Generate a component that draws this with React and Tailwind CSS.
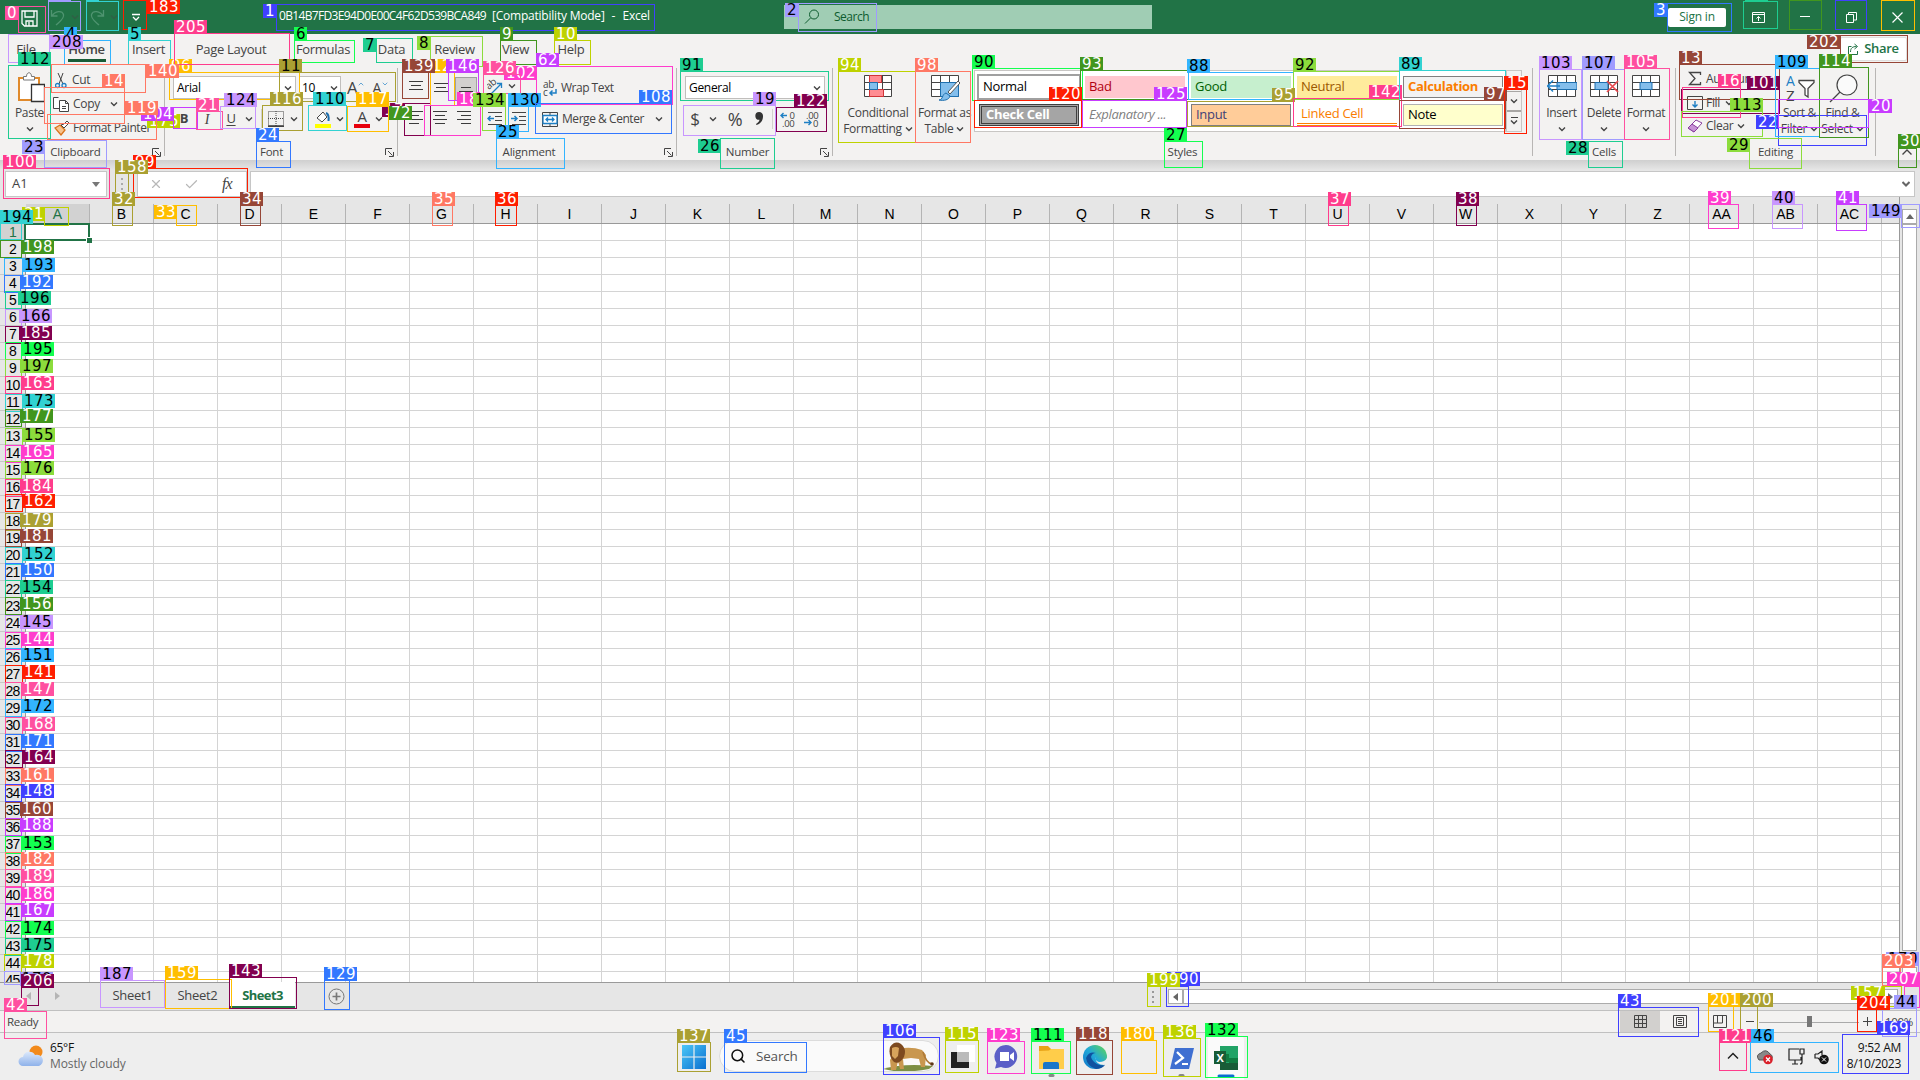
import React from "react";
import { ChevronDown, ChevronUp, Search, X, Check } from "lucide-react";

const Chev = ({ className = "" }) => (
  <svg viewBox="0 0 8 8" className={"h-2 w-2 shrink-0 " + className} fill="none" stroke="#444" strokeWidth="1.4"><path d="M1 2.5 4 5.5 7 2.5" /></svg>
);

const Svg = ({ w = 16, h = 16, className = "", children }) => (
  <svg width={w} height={h} viewBox={`0 0 ${w} ${h}`} className={"block shrink-0 " + className} fill="none" stroke="#444" strokeWidth="1">{children}</svg>
);

const Launcher = () => (
  <Svg w={9} h={9}><path d="M.5 7V.5H7M3 3l4.5 4.5M8.5 4v4.5H4" /></Svg>
);

const Lines = ({ rows }) => (
  <Svg w={16} h={16}>{rows.map(([y, a, b]) => <path key={y} d={`M${a} ${y}.5H${b}`} stroke="#3b3b3b" />)}</Svg>
);

/* ---------- title bar ---------- */
function TitleBar() {
  return (
    <div className="flex h-[34px] items-center bg-[#217346] text-[12px] text-white">
      <Svg w={17} h={17} className="ml-[21px] mt-[2px]"><path stroke="#fff" strokeWidth="1.3" d="M1 1h15v15H3.500L1 13.500zM4 1v6h9V1M5 16v-5h7v5M8 12v4" /></Svg>
      <Svg w={16} h={18} className="ml-[12px]"><path stroke="#4f9470" strokeWidth="1.3" d="M1.500 2v6h6M2 8C5 3 12 2 13.500 6.500 14.500 11 9 14 6 17" /></Svg>
      <Chev className="ml-[5px] opacity-40" />
      <Svg w={16} h={18} className="ml-[10px]"><path stroke="#4f9470" strokeWidth="1.3" d="M14.500 2v6h-6M14 8C11 3 4 2 2.500 6.500 1.500 11 7 14 10 17" /></Svg>
      <Chev className="ml-[5px] opacity-40" />
      <Svg w={8} h={8} className="ml-[14px]"><path stroke="#fff" strokeWidth="1.300" d="M0 1.500h8M1 4l3 3 3-3" /></Svg>
      <div className="ml-[139px] mt-[-2px] flex w-[376px] whitespace-pre text-[12px]">
        <span className="w-[213px] tracking-[-0.66px]">0B14B7FD3E94D0E00C4F62D539BCA849</span>
        <span className="tracking-[-0.22px]">[Compatibility Mode]</span>
        <span className="ml-[7px]">-</span>
        <span className="ml-[7px] tracking-[-0.2px]">Excel</span>
      </div>
      <div className="ml-[129px] flex h-6 w-[368px] items-center bg-[#a0cdb4] text-[#0e5c2f]">
        <Svg w={16} h={16} className="ml-5"><circle cx="10" cy="5.500" r="4.500" stroke="#0e5c2f" /><path stroke="#0e5c2f" d="M6.500 9 1 14.500" /></Svg>
        <span className="ml-[14px] tracking-[-0.5px]">Search</span>
      </div>
      <div className="ml-[516px] flex h-[19px] w-[58px] items-center justify-center rounded-[2px] bg-white tracking-[-0.2px] text-[#217346]">Sign in</div>
      <Svg w={13} h={11} className="ml-[26px]"><path stroke="#fff" d="M.5.5h12v10H.5zM.5 2.500h12M6.500 9V4.500M4.500 6.500l2-2 2 2" /></Svg>
      <Svg w={10} h={10} className="ml-[35px]"><path stroke="#fff" d="M0 4.500h10" /></Svg>
      <Svg w={11} h={11} className="ml-[36px]"><path stroke="#fff" d="M.5 2.500h7v8h-7zM2.500 2.500v-2h8v7.500h-3" /></Svg>
      <Svg w={11} h={11} className="ml-[35px]"><path stroke="#fff" strokeWidth="1.200" d="M.5.5l10 10M10.500.5l-10 10" /></Svg>
    </div>
  );
}

/* ---------- ribbon ---------- */
function Tabs() {
  const t = "flex h-8 items-center justify-center whitespace-nowrap ";
  return (
    <div className="flex h-8 text-[13px] tracking-[-0.3px] text-[#444]">
      <div className={t + "ml-1 w-[44px]"}>File</div>
      <div className={t + "relative ml-[15px] w-[47px] font-semibold"}>Home<span className="absolute bottom-[4px] left-[5px] h-[3px] w-[38px] bg-[#185c37]" /></div>
      <div className={t + "ml-[17px] w-[43px]"}>Insert</div>
      <div className={t + "ml-[3px] w-[116px]"}>Page Layout</div>
      <div className={t + "ml-1 w-[60px]"}>Formulas</div>
      <div className={t + "ml-[18px] w-[41px]"}>Data</div>
      <div className={t + "ml-[17px] w-[51px]"}>Review</div>
      <div className={t + "ml-[19px] w-[33px]"}>View</div>
      <div className={t + "ml-[22px] w-[34px]"}>Help</div>
      <div className="ml-auto mr-[13px] mt-[3px] flex h-6 w-[67px] items-center justify-center gap-[5px] rounded-[2px] border border-[#e0dfde] bg-white font-semibold text-[#217346]">
        <Svg w={11} h={12}><path stroke="#217346" d="M3.500 3.500h-3v8h9V8M2.500 9c0-4 2-5.500 6-5.500M6.500 1l3 2.500-3 2.500" /></Svg>Share
      </div>
    </div>
  );
}

function Group({ name, w, launcher, pad, children }) {
  return (
    <div className={"flex shrink-0 " + w}>
      <div className="flex min-w-0 flex-1 flex-col">
        <div className="flex h-[78px]">{children}</div>
        <div className="flex h-4 items-center text-[11.500px] tracking-[-0.2px]">
          <div className={"flex-1 text-center " + pad}>{name}</div>
          {launcher && <div className="mr-[3px]"><Launcher /></div>}
        </div>
      </div>
      <div className="mt-[2px] h-[88px] w-px bg-[#b8b6b4]" />
    </div>
  );
}

const Big = ({ icon, a, b, w }) => (
  <div className={"flex flex-col items-center pt-[6px] " + w}>
    <div className="flex h-[33px] items-start pt-[3px]">{icon}</div>
    <div className="h-4 whitespace-nowrap leading-4">{a}</div>
    <div className="flex h-4 items-center gap-[3px] whitespace-nowrap leading-4">{b}<Chev /></div>
  </div>
);

const Table = ({ children }) => (
  <Svg w={30} h={26}><path d="M1.500.5h27v21h-27zM1.500 7.500h27M1.500 14.500h27M10.500.5v21M19.500.5v21" stroke="#444" fill="#fff" />{children}</Svg>
);

const STYLES = [
  ["Normal", "bg-white text-black outline outline-2 outline-[#a0a0a0]"],
  ["Bad", "bg-[#ffc7ce] text-[#b00010]"],
  ["Good", "bg-[#c6efce] text-[#006100]"],
  ["Neutral", "bg-[#ffeb9c] text-[#9c5700]"],
  ["Calculation", "border border-[#7f7f7f] bg-[#f2f2f2] font-bold text-[#fa7d00]"],
  ["Check Cell", "border-[3px] border-double border-[#3f3f3f] bg-[#a5a5a5] font-bold text-white"],
  ["Explanatory ...", "bg-white italic text-[#7f7f7f]"],
  ["Input", "border border-[#7f7f7f] bg-[#ffcc99] text-[#3f3f76]"],
  ["Linked Cell", "border-b-[3px] border-double border-[#ff8001] bg-white text-[#fa7d00]"],
  ["Note", "border border-[#b2b2b2] bg-[#ffffcc] text-black"],
];

function Ribbon() {
  const row = "flex items-center whitespace-nowrap ";
  return (
    <div className="h-[126px] bg-[#f3f2f1] text-[12px] tracking-[-0.3px] text-[#444]">
      <Tabs />
      <div className="flex">
        <Group name="Clipboard" w="w-[165px]" launcher pad="pr-[1px]">
          <div className="ml-2 flex w-[43px] flex-col items-center pt-[6px]">
            <Svg w={27} h={32} className="ml-[4px]"><path fill="#fff" stroke="#e08a2c" strokeWidth="2" d="M1 6h20v22H1z" /><path fill="#fff" stroke="#777" d="M5.500 8V4.500h3c0-5 5-5 5 0h3V8z" /><path fill="#fff" stroke="#333" strokeWidth="1.300" d="M13.500 12.500h13v17h-13z" /></Svg>
            <div className="mt-px h-4 leading-4">Paste</div>
            <Chev className="mt-1" />
          </div>
          <div className="pt-[2px]">
            <div className={row + "h-6"}><Svg w={12} h={17} className="ml-1"><path d="M3 1l5 11M8 1 4 12" /><circle cx="2.500" cy="13.500" r="2" stroke="#1e7fc4" strokeWidth="1.300" /><circle cx="9" cy="13.500" r="2" stroke="#1e7fc4" strokeWidth="1.300" /></Svg><span className="ml-[5px]">Cut</span></div>
            <div className={row + "h-6"}><Svg w={17} h={17} className="ml-[2px]"><path fill="#fff" d="M6 12.500H.5V1.500h5M6.500 4.500h6l3 3v8h-9zM12.500 4.500v3h3M9 10.500h4M9 12.500h4" /></Svg><span className="ml-[3px]">Copy</span><Chev className="ml-[10px]" /></div>
            <div className={row + "h-6"}><Svg w={16} h={16} className="ml-[3px]"><path stroke="#d9731a" strokeWidth="1.300" fill="#f7c38e" d="M1 8l5-3 5 5-4 5z" /><path fill="#fff" d="M7 5l3 3 5-5-2-2-3 3z" /></Svg><span className="ml-[3px] tracking-[-0.4px]">Format Painter</span></div>
          </div>
        </Group>

        <Group name="Font" w="w-[233px]" launcher pad="pr-[7px]">
          <div className="pl-2">
            <div className={row + "mt-[10px] h-[23px] text-black"}>
              <div className="flex h-[23px] w-[123px] items-center justify-between border border-[#c0bebc] bg-white px-[3px]"><span>Arial</span><Chev /></div>
              <div className="ml-[3px] flex h-[23px] w-[42px] items-center justify-between border border-[#c0bebc] bg-white px-[2px]"><span>10</span><Chev /></div>
              <span className="ml-[6px] text-[17px] text-[#444]">A</span><ChevronUp size={8} color="#1e7fc4" className="mb-2" />
              <span className="ml-[7px] text-[14px] text-[#444]">A</span><ChevronDown size={8} color="#1e7fc4" className="mb-2" />
            </div>
            <div className={row + "mt-2 h-6"}>
              <span className="w-[22px] text-center text-[13px] font-bold">B</span>
              <span className="w-6 text-center font-['Liberation_Serif'] text-[14px] italic">I</span>
              <span className="w-6 text-center text-[13px] underline underline-offset-2">U</span>
              <Chev className="ml-[2px]" />
              <div className="ml-[8px] h-5 w-px bg-[#d2d0ce]" />
              <Svg w={16} h={16} className="ml-[6px]"><path strokeDasharray="1 1" d="M.5.5h15v14H.5zM8 0v15M0 7.500h15" /><path stroke="#222" strokeWidth="1.300" d="M0 15.200h16" /></Svg>
              <Chev className="ml-[6px]" />
              <Svg w={16} h={18} className="ml-[17px]"><path fill="#fff" d="M2 8l6-6 4 5-5 5z" /><path stroke="#1e6fae" strokeWidth="2" d="M11 3c3 1 3 4 2.500 8" /><path fill="#ff0" stroke="none" d="M0 14h16v4H0z" /></Svg>
              <Chev className="ml-[5px]" />
              <div className="ml-[10px] flex w-4 flex-col items-center"><span className="h-[14px] text-[15px] leading-[13px]">A</span><span className="h-1 w-4 bg-red-600" /></div>
              <Chev className="ml-[5px]" />
            </div>
          </div>
        </Group>

        <Group name="Alignment" w="w-[279px]" launcher pad="pl-[10px] pr-[14px]">
          <div className="w-[87px]">
            <div className={row + "mt-[6px] h-7 gap-1 pl-2"}>
              <div className="w-5 pl-[2px]"><Lines rows={[[3, 1, 15], [7, 3, 13], [11, 1, 15]]} /></div>
              <div className="ml-px w-5 pl-[2px] pt-1"><Lines rows={[[3, 1, 15], [7, 3, 13], [11, 1, 15]]} /></div>
              <div className="mt-[6px] flex h-[24px] w-[22px] items-end justify-center border border-[#a0a0a0] bg-[#d2d0ce]"><Lines rows={[[3, 3, 13], [7, 1, 15], [11, 3, 13]]} /></div>
            </div>
            <div className={row + "mt-[6px] h-6 gap-2 pl-[10px]"}>
              <Lines rows={[[1, 1, 15], [5, 1, 11], [9, 1, 15], [13, 1, 11]]} />
              <Lines rows={[[1, 1, 15], [5, 3, 13], [9, 1, 15], [13, 3, 13]]} />
              <Lines rows={[[1, 1, 15], [5, 5, 15], [9, 1, 15], [13, 5, 15]]} />
            </div>
          </div>
          <div className="w-[54px]">
            <div className={row + "mt-[8px] h-6 pl-[2px]"}><Svg w={17} h={17}><path stroke="#1e7fc4" strokeWidth="1.300" d="M4 16 14 6M10 5.500h4.500V10" /><text x="0" y="9" transform="rotate(-40 5 8)" fontSize="10" fill="#444" stroke="none">ab</text></Svg><Chev className="ml-1" /></div>
            <div className={row + "mt-[9px] h-6 gap-2 pl-[2px]"}>
              <Svg w={16} h={16}><path d="M1 1.500h14M8 5.500h7M8 9.500h7M1 13.500h14" /><path stroke="#1e7fc4" strokeWidth="1.500" d="M7 7.500H1M3.500 5 1 7.500 3.500 10" /></Svg>
              <Svg w={16} h={16}><path d="M1 1.500h14M8 5.500h7M8 9.500h7M1 13.500h14" /><path stroke="#1e7fc4" strokeWidth="1.500" d="M0 7.500h6M3.500 5 6 7.500 3.500 10" /></Svg>
            </div>
          </div>
          <div>
            <div className={row + "mt-[10px] h-6 pl-[4px]"}><Svg w={16} h={17}><text x="0" y="8" fontSize="10" fill="#444" stroke="none">ab</text><text x="0" y="16" fontSize="10" fill="#444" stroke="none">c</text><path stroke="#1e7fc4" strokeWidth="1.500" d="M13 9v4H7M9.500 10.500 7 13l2.500 2.500" /></Svg><span className="ml-[2px] tracking-[-0.5px]">Wrap Text</span></div>
            <div className={row + "mt-[7px] h-6 pl-[3px]"}><Svg w={16} h={15}><path d="M.5.5h15v14H.5zM.5 3.500h15M.5 11.500h15M8 .5v3M8 11.500v3" /><path fill="#fff" stroke="#1e7fc4" strokeWidth="1.300" d="M1 3.500h14v8H1zM4 7.500h8M6 5.500l-2 2 2 2M10 5.500l2 2-2 2" /></Svg><span className="ml-1 w-[84px] tracking-[-0.45px]">Merge & Center</span><Chev className="ml-[9px]" /></div>
          </div>
        </Group>

        <Group name="Number" w="w-[156px]" launcher pad="pr-[2px]">
          <div className="pl-2">
            <div className="mt-[10px] flex h-[23px] w-[140px] items-center justify-between border border-[#c0bebc] bg-white px-[3px] text-black"><span>General</span><Chev /></div>
            <div className={row + "mt-2 h-6"}>
              <span className="w-5 text-center text-[17px]">$</span><Chev className="ml-1" />
              <span className="ml-[8px] w-5 text-center text-[18px]">%</span>
              <Svg w={10} h={14} className="ml-[9px] mr-px"><path fill="#333" stroke="none" d="M5 0a4 4 0 0 1 4 4.500C9 9 6 12 2.500 13L2 12c2-1 3.300-2.500 3.500-4.200A3.900 3.900 0 1 1 5 0z" /></Svg>
              <div className="ml-[7px] h-5 w-px bg-[#d2d0ce]" />
              <Svg w={16} h={18} className="ml-[7px]"><path stroke="#1e7fc4" strokeWidth="1.400" d="M7 5.500H1M3.500 3 1 5.500 3.500 8" /><text x="9.500" y="8.500" fontSize="9.500" fill="#444" stroke="none">0</text><text x="2" y="17" fontSize="9.500" fill="#444" stroke="none">.00</text></Svg>
              <Svg w={16} h={18} className="ml-2"><path stroke="#1e7fc4" strokeWidth="1.400" d="M0 12.500h7M4.500 10 7 12.500 4.500 15" /><text x="2" y="8.500" fontSize="9.500" fill="#444" stroke="none">.00</text><text x="9" y="17" fontSize="9.500" fill="#444" stroke="none">0</text></Svg>
            </div>
          </div>
        </Group>

        <Group name="Styles" w="w-[700px]" pad="">
          <Big w="ml-[6px] w-[78px]" a="Conditional" b="Formatting" icon={<Table><path fill="#ff8c92" stroke="#d13438" d="M6.500.5h12v7h-12zM6.500 14.500h14v7h-14z" /><path fill="#83beec" stroke="#1e6fae" d="M6.500 7.500h8v7h-8z" /></Table>} />
          <Big w="w-[55px]" a="Format as" b="Table" icon={<Table><path fill="#83beec" stroke="#1e6fae" d="M10.500 7.500h18v14h-18z" /><path fill="#fff" stroke="#555" d="M28 6 18 17l2 2L30 8z" /><path fill="#83beec" stroke="#1e6fae" d="M9 25c4 0 3-6 7-7l4 3c-1 4-6 5-11 4z" /></Table>} />
          <div className="ml-[2px] mt-1 flex h-[62px] w-[548px]">
            <div className="grid h-[62px] w-[532px] grid-cols-[repeat(5,100px)] content-start gap-x-[6px] gap-y-[6px] border border-[#c8c6c4] bg-white pl-1 pt-[5px] text-[13px]">
              {STYLES.map(([n, c]) => <div key={n} className={"flex h-[22px] items-center whitespace-nowrap pl-1 tracking-[-0.3px] " + c}>{n}</div>)}
            </div>
            <div className="flex flex-col border border-[#c8c6c4]">
              <div className="flex h-5 w-[14px] items-center justify-center"><Chev className="rotate-180" /></div>
              <div className="flex h-5 w-[14px] items-center justify-center border-y border-[#a8a6a4]"><Chev /></div>
              <div className="flex h-5 w-[14px] flex-col items-center justify-center border-t border-[#a8a6a4]"><span className="h-px w-[7px] bg-[#444]" /><Chev /></div>
            </div>
          </div>
        </Group>

        <Group name="Cells" w="w-[143px]" pad="">
          <Big w="ml-[7px] w-[43px]" a="Insert" icon={<Table><path fill="#83beec" stroke="#1e6fae" d="M10 7.500h20v7H10z" /><path stroke="#1e7fc4" strokeWidth="1.500" d="M13 11H1M6 5.500.5 11 6 16.500" /></Table>} />
          <Big w="w-[42px]" a="Delete" icon={<Table><path fill="#83beec" stroke="#1e6fae" d="M6 7.500h13v7H6z" /><path stroke="#e8484c" strokeWidth="1.700" d="M18 6l11 11M29 6 18 17" /></Table>} />
          <Big w="w-[42px]" a="Format" icon={<Table><path fill="#83beec" stroke="#1e6fae" d="M9 7.500h12v7H9z" /></Table>} />
        </Group>

        <Group name="Editing" w="w-[200px]" pad="">
          <div className="w-[102px] pl-3 pt-px">
            <div className={row + "h-6"}><Svg w={14} h={16}><path strokeWidth="1.300" d="M12.500 4V1.500H1.500L7 7.500l-5.500 6h11V11" /></Svg><span className="ml-1">AutoSum</span></div>
            <div className={row + "h-6"}><Svg w={16} h={14} className="-ml-px"><path d="M.5.5h15v13H.5zM.5 3.500h15" /><path stroke="#1e7fc4" strokeWidth="1.400" d="M8 5v6M5.500 8.500 8 11l2.500-2.500" /></Svg><span className="ml-[3px]">Fill</span><Chev className="ml-[5px]" /></div>
            <div className={row + "h-[22px]"}><Svg w={16} h={14} className="-ml-px"><path fill="#fff" stroke="#8a3f9e" d="M1 9 9 1l6 3-8 9z" /><path fill="#c793d6" stroke="#8a3f9e" d="M1 9l4-4 6 4-4 4z" /></Svg><span className="ml-[3px]">Clear</span><Chev className="ml-[4px]" /></div>
          </div>
          <Big w="w-[43px]" a="Sort &" b="Filter" icon={<Svg w={30} h={28}><text x="1" y="11" fontSize="14" fill="#1e7fc4" stroke="none">A</text><text x="1" y="26" fontSize="15" fill="#444" stroke="none">Z</text><path fill="#fff" strokeWidth="1.300" d="M14 5.500h15v2l-6 6V22l-3-2v-6.500l-6-6z" /></Svg>} />
          <Big w="w-[43px]" a="Find &" b="Select" icon={<Svg w={30} h={30} className="-mt-px"><circle cx="19" cy="11" r="10" fill="#fafafa" strokeWidth="1.200" /><path strokeWidth="1.200" d="M12 18 2 28" /></Svg>} />
        </Group>
        <div className="ml-[26px] mt-[83px]"><Svg w={10} h={7}><path strokeWidth="1.400" d="M.5 5.500 5 1l4.500 4.500" /></Svg></div>
      </div>
    </div>
  );
}

/* ---------- formula bar ---------- */
function FormulaBar() {
  return (
    <div className="flex h-[37px] bg-[#e6e6e6] bg-[linear-gradient(#cfcfcf,#e6e6e6_10px)] pt-[11px] text-[#444]">
      <div className="ml-[5px] flex h-[26px] w-[102px] items-center justify-between border border-[#c6c6c6] bg-white px-[6px] text-[13px]">A1<Svg w={8} h={5}><path fill="#777" stroke="none" d="M0 0h8L4 5z" /></Svg></div>
      <div className="ml-[14px] flex w-[2px] flex-col justify-center gap-[3px]">{[0, 1, 2].map((i) => <span key={i} className="h-[2px] w-[2px] bg-[#aaa]" />)}</div>
      <div className="ml-[14px] flex h-[26px] w-[110px] items-center border border-[#c6c6c6] bg-white">
        <X size={14} color="#b8b8b8" className="ml-[11px]" /><Check size={15} color="#b8b8b8" className="ml-[21px]" />
        <span className="ml-[23px] font-['Liberation_Serif'] text-[16px] italic tracking-[-1px]">fx</span>
      </div>
      <div className="ml-[3px] flex h-[26px] w-[1665px] items-center justify-end border border-[#c6c6c6] bg-white pr-1"><Svg w={8} h={8}><path strokeWidth="2" stroke="#666" d="M.5 2 4 5.500 7.500 2" /></Svg></div>
    </div>
  );
}

/* ---------- sheet ---------- */
const COLS = [..."ABCDEFGHIJKLMNOPQRSTUVWXYZ", "AA", "AB", "AC"];
const ROWS = Array.from({ length: 45 }, (_, i) => i + 1);

function Sheet() {
  return (
    <div className="flex h-[786px] bg-[#e6e6e6] font-['Liberation_Sans'] text-[14px] text-black">
      <div className="h-[786px] w-[1899px] overflow-hidden border-b border-[#9a9a9a]">
        <div className="flex h-[27px] border-b border-[#999]">
          <div className="w-[26px] shrink-0" />
          {COLS.map((c, i) => (
            <div key={c} className={"mt-[7px] flex h-[19px] w-16 shrink-0 items-center justify-center border-r border-[#b4b4b4] pt-[2px] " + (i === 0 ? "bg-[#d2d2d2] text-[#217346]" : "")}>{c}</div>
          ))}
        </div>
        <div className="flex">
          <div className="w-[26px] shrink-0 border-r border-[#999]">
            {ROWS.map((r) => (
              <div key={r} className={"flex h-[17px] items-center justify-center border-b border-[#c8c8c8] pt-px text-[14px] tracking-[-0.8px] " + (r === 1 ? "bg-[#d2d2d2] text-[#217346]" : "")}>{r}</div>
            ))}
          </div>
          <div className="relative h-[765px] flex-1 bg-white bg-[linear-gradient(to_right,transparent_63px,#d4d4d4_63px),linear-gradient(to_bottom,transparent_16px,#d4d4d4_16px)] bg-[size:64px_17px]">
            <div className="absolute -left-[2px] -top-px h-[18px] w-[66px] border-2 border-[#217346]" />
            <div className="absolute left-[60px] top-[13px] h-[6px] w-[6px] border-l border-t border-white bg-[#217346]" />
          </div>
        </div>
      </div>
      <div className="w-[3px] border-l border-[#999]" />
      <div className="mt-3 flex w-[15px] flex-col">
        <div className="flex h-[15px] items-center justify-center border border-[#ababab] bg-white"><Svg w={8} h={5}><path fill="#666" stroke="none" d="M0 5h8L4 0z" /></Svg></div>
        <div className="h-[727px] border border-[#ababab] bg-white" />
        <div className="mt-4 flex h-[15px] border border-[#ababab] bg-white" />
      </div>
    </div>
  );
}

function SheetTabs() {
  const tab = "flex h-[25px] w-[65px] items-center justify-center ";
  return (
    <div className="flex h-[28px] border-b border-[#c0c0c0] bg-[#e6e6e6] text-[13px] tracking-[-0.3px] text-[#444]">
      <Svg w={5} h={8} className="ml-[26px] mt-[9px]"><path fill="#b5b5b5" stroke="none" d="M5 0v8L0 4z" /></Svg>
      <Svg w={5} h={8} className="ml-6 mt-[9px]"><path fill="#b5b5b5" stroke="none" d="M0 0v8l5-4z" /></Svg>
      <div className={tab + "ml-[40px] border-r border-[#ababab] pl-px"}>Sheet1</div>
      <div className={tab + "border-r border-[#ababab] pl-px"}>Sheet2</div>
      <div className={tab + "-mt-px h-[26px] border-b-2 border-[#217346] bg-white pt-[3px] font-bold tracking-[-0.6px] text-[#217346]"}>Sheet3</div>
      <Svg w={17} h={17} className="ml-[33px] mt-[5px]"><circle cx="8.500" cy="8.500" r="7.500" stroke="#777" /><path stroke="#777" strokeWidth="1.700" d="M8.500 4.500v8M4.500 8.500h8" /></Svg>
      <div className="ml-[807px] mt-2 flex w-[2px] flex-col gap-[3px]">{[0, 1, 2].map((i) => <span key={i} className="h-[2px] w-[2px] bg-[#999]" />)}</div>
      <div className="ml-[14px] mt-[6px] flex h-[15px] w-[15px] items-center justify-center border border-[#ababab] bg-white"><Svg w={5} h={8}><path fill="#666" stroke="none" d="M5 0v8L0 4z" /></Svg></div>
      <div className="mt-[6px] h-[15px] w-[700px] border border-[#ababab] bg-white" />
      <div className="mt-[6px] flex h-[15px] w-[15px] items-center justify-center border border-[#ababab] bg-white"><Svg w={5} h={8}><path fill="#666" stroke="none" d="M0 0v8l5-4z" /></Svg></div>
    </div>
  );
}

function StatusBar() {
  return (
    <div className="flex h-[22px] items-center border-b border-[#c0c0c0] bg-[#f3f2f1] text-[11.500px] tracking-[-0.3px] text-[#444]">
      <span className="ml-[7px] w-[1613px]">Ready</span>
      <div className="flex h-[21px] w-10 items-center justify-center bg-[#d2d0ce]"><Svg w={13} h={13}><path d="M.5.5h12v12H.5zM.5 4.500h12M.5 8.500h12M4.500.5v12M8.500.5v12" /></Svg></div>
      <div className="flex w-10 items-center justify-center"><Svg w={14} h={13}><path d="M.5.5h13v12H.5zM3.500 2.500h7v8h-7zM5 4.500h4M5 6.500h4M5 8.500h4" /></Svg></div>
      <Svg w={14} h={13} className="ml-[13px]"><path d="M.5.5h13v12H.5zM4.500.5v7.500M9.500.5V8M.5 8h9" /></Svg>
      <Svg w={8} h={9} className="ml-[19px]"><path d="M0 4.500h8" /></Svg>
      <div className="ml-[5px] flex h-3 w-[100px] items-center justify-center bg-[linear-gradient(transparent_6px,#aaa_6px,#aaa_7px,transparent_7px)]"><span className="h-[11px] w-[5px] bg-[#777]" /></div>
      <Svg w={9} h={9} className="ml-1"><path d="M0 4.500h9M4.500 0v9" /></Svg>
      <span className="ml-[13px]">100%</span>
    </div>
  );
}

function Taskbar() {
  const cell = "flex h-full items-center justify-center ";
  return (
    <div className="flex h-[47px] bg-[#eeeeee] text-[12px] text-[#111]">
      <Svg w={26} h={24} className="ml-[18px] mt-[11px]">
        <defs><linearGradient id="cl" x1="0" y1="0" x2="0" y2="1"><stop offset="0" stopColor="#dbe8fb" /><stop offset="1" stopColor="#8fb2ea" /></linearGradient></defs>
        <circle cx="18" cy="8" r="6.500" fill="#f28a1c" stroke="none" /><path fill="url(#cl)" stroke="none" d="M5 22a4.500 4.500 0 0 1 0-9 6.500 6.500 0 0 1 12-2 5.600 5.600 0 0 1 4 11z" />
      </Svg>
      <div className="ml-[6px] mt-[7px] w-[627px] leading-4"><div className="tracking-[-0.3px]">65°F</div><div className="tracking-[-0.1px] text-[#666]">Mostly cloudy</div></div>
      <Svg w={24} h={24} className="ml-[5px] mt-[12px]">
        <defs><linearGradient id="wn" x1="0" y1="0" x2="1" y2="1"><stop offset="0" stopColor="#4cc7f7" /><stop offset="1" stopColor="#0a6fd0" /></linearGradient></defs>
        <path fill="url(#wn)" stroke="none" d="M0 0h11.400v11.400H0zM12.600 0H24v11.400H12.600zM0 12.600h11.400V24H0zM12.600 12.600H24V24H12.600z" />
      </Svg>
      <div className="ml-[13px] mt-[7px] flex h-[32px] w-[220px] items-center overflow-hidden rounded-full border border-[#dcdcdc] bg-[#fafafa]">
        <Search size={16} strokeWidth={2.300} className="ml-[10px]" /><span className="ml-[10px] text-[13.500px] tracking-[-0.2px] text-[#555]">Search</span>
        <Svg w={52} h={30} className="ml-auto mr-[3px] mt-px">
          <path fill="#7d8f43" stroke="none" d="M0 27q20-6 50-3l-4 3q-18 3-30 3z" />
          <path fill="#c9974f" stroke="none" d="M14 7q14-3 25 1l4 5-1 12h-4l-2-8-8-1-8 1 1 10h-4l-2-8-2 9h-5l-1-10z" /><path stroke="#b07a38" strokeWidth="1.600" d="M40 10q3 11 9 12" /><circle cx="49" cy="22" r="1.800" fill="#5e3817" stroke="none" />
          <path fill="#7d4a20" stroke="none" d="M7 5Q12-2 18 2q6 5 3 13-5 8-10 5-6-6-4-15z" /><path fill="#d8a45c" stroke="none" d="M9 6q4-2 7 0l-1 8-3 3-3-3z" />
        </Svg>
      </div>
      <div className={cell + "ml-[7px] w-[34px]"}><Svg w={24} h={24}><path fill="#222" stroke="none" d="M0 7h18v16H0z" /><path fill="#fff" stroke="none" d="M6 0h18v17H6z" /><path fill="#bbb" stroke="none" d="M6 7h12v10H6z" /></Svg></div>
      <div className={cell + "ml-[7px] w-[38px]"}><Svg w={24} h={24}><path fill="#5b5fc7" stroke="none" d="M12 0a11.500 11.500 0 1 1-5 22L1 23.500 2.500 18A11.500 11.500 0 0 1 12 0z" /><path fill="#fff" stroke="none" d="M6 7h9v9H6zM16 10l4-3v9l-4-3z" /></Svg></div>
      <div className={cell + "ml-[6px] w-[40px]"}><Svg w={25} h={32} className="mt-2"><path fill="#e8a317" stroke="none" d="M0 1h9l3 3v6H0z" /><path fill="#ffcd4a" stroke="none" d="M0 6l10-.5L12 4h13v20H0z" /><path fill="#1976c9" stroke="none" d="M4 24v-5q0-2 2-2h12q2 0 2 2v5z" /><path stroke="#888" strokeWidth="3" strokeLinecap="round" d="M11 30.500h3" /></Svg></div>
      <div className={cell + "ml-[5px] w-[37px]"}><Svg w={24} h={24}>
        <defs><linearGradient id="ed" x1="0" y1="1" x2="1" y2="0"><stop offset="0" stopColor="#1074c9" /><stop offset=".5" stopColor="#22a8d8" /><stop offset="1" stopColor="#64d84c" /></linearGradient></defs>
        <circle cx="12" cy="12" r="12" fill="url(#ed)" stroke="none" /><path fill="#0f52a0" stroke="none" d="M8 12q1-4 5-4-7-2-10 5 1 8 10 11 6 0 9-4-4 1-8-1-5-3-6-7z" /><path fill="#eee" stroke="none" d="M12 12q0 4 4 5 6 0 8-4v5l-3 2q-8 0-9-8z" />
      </Svg></div>
      <div className={cell + "ml-[49px] w-[38px]"}><Svg w={25} h={32} className="mt-2"><path fill="#3f6fd1" stroke="none" d="M6 3h19l-5 21H1z" /><path stroke="#fff" strokeWidth="2.200" d="M8 7l6 6-8 6M13 19h6" /><path stroke="#888" strokeWidth="3" strokeLinecap="round" d="M11 30.500h3" /></Svg></div>
      <div className={cell + "ml-[8px] mt-[3px] h-[40px] w-[36px] rounded bg-[#fafafa]"}><Svg w={24} h={32} className="mt-[4px]"><path fill="#21a366" stroke="none" d="M6 0h18v24H6z" /><path fill="#107c41" stroke="none" d="M6 8h9v8H6zM15 12h9v5h-9z" /><path fill="#185c37" stroke="none" d="M6 17h18v7H6zM0 5h12v13H0z" /><text x="2.500" y="15.500" fontSize="11" fontWeight="700" fill="#fff" stroke="none">X</text><path stroke="#0a6fd0" strokeWidth="3" strokeLinecap="round" d="M5 30h14" /></Svg></div>
      <Svg w={12} h={8} className="ml-[483px] mt-[19px]"><path stroke="#222" strokeWidth="1.500" d="M1 6.500 6 1.500l5 5" /></Svg>
      <Svg w={18} h={16} className="ml-[17px] mt-[16px]"><path fill="#888" stroke="#555" d="M3 11Q-1 6 5 4q5-5 9 1 4 2 1 6z" /><circle cx="12" cy="10.500" r="4.800" fill="#d9202a" stroke="none" /><path stroke="#fff" strokeWidth="1.300" d="M10 8.500l4 4M14 8.500l-4 4" /></Svg>
      <Svg w={17} h={17} className="ml-[14px] mt-[15px]"><path stroke="#222" strokeWidth="1.200" d="M11 1H1v11h12V9M4 16h6M7 12v4M12 1h4v5h-4zM14 6v8q0 2-2 2" /></Svg>
      <Svg w={15} h={15} className="ml-[9px] mt-[17px]"><path stroke="#222" strokeWidth="1.200" d="M1 4h3l4-3v4M1 4v4h3l2 2" /><circle cx="10" cy="9.500" r="4.800" fill="#111" stroke="none" /><path stroke="#fff" d="M8 7.500l4 4M12 7.500l-4 4" /></Svg>
      <div className="ml-auto mr-[19px] mt-[7px] text-right leading-4 tracking-[-0.3px]"><div>9:52 AM</div><div>8/10/2023</div></div>
    </div>
  );
}

/* ---------- numbered element markers ---------- */
const C = {
  hot: "#ff50a0", blue: "#4040ff", lil: "#c896ff", red: "#ff1e00", sky: "#32b4ff", teal: "#32d2d2", pink: "#ff3c8c",
  lime: "#14ff50", sea: "#1ecd91", cor: "#ff7864", vio: "#c83cff", olv: "#aaa032", peri: "#a09bff", roy: "#3278ff",
  grn: "#41961e", brn: "#964637", mag: "#ff3ccd", apl: "#8cdc3c", org: "#ffbe00", mar: "#82004f", yel: "#bed200",
};
// [label, label x, label y, colour, dark text, box x, y, width, height]
const MARKS = [
  ["21", 48, -12, "peri", 1, 48, 1, 33, 30], ["4", 86, -12, "teal", 1, 86, 1, 33, 30], ["0", 5, 6, "hot", 0, 18, 6, 28, 27], ["1", 263, 4, "blue", 0, 276, 4, 379, 27],
  ["183", 147, 0, "red", 0, 123, 0, 24, 30], ["4", 64, 27, "sky", 1, 64, 40, 47, 25], ["208", 50, 35, "lil", 1, 8, 34, 42, 29], ["5", 128, 27, "teal", 1, 128, 40, 43, 25],
  ["6", 294, 27, "lime", 1, 294, 40, 61, 23], ["7", 363, 38, "sea", 1, 376, 38, 37, 25],
  ["112", 18, 52, "sea", 1, 8, 65, 43, 74], ["14", 102, 74, "cor", 0, 44, 87, 81, 37],
  ["96", 169, 59, "org", 0, 169, 72, 131, 28], ["205", 174, 20, "pink", 0, 174, 33, 116, 32], ["140", 146, 64, "cor", 0, 51, 64, 95, 29],
  ["11", 279, 59, "olv", 1, 279, 72, 117, 30], ["175", 147, 114, "yel", 0, 0, 0, 0, 0], ["104", 141, 107, "vio", 0, 173, 107, 25, 22],
  ["119", 125, 101, "cor", 0, 47, 114, 110, 26],
  ["21", 196, 98, "hot", 0, 196, 111, 27, 19], ["124", 224, 93, "lil", 1, 220, 106, 36, 23], ["116", 270, 92, "olv", 0, 262, 105, 41, 26],
  ["110", 313, 92, "teal", 1, 308, 105, 39, 26], ["17", 382, 103, "mar", 0, 404, 103, 27, 33], ["117", 356, 92, "org", 0, 347, 106, 42, 26], ["72", 389, 106, "grn", 0, 0, 0, 0, 0],
  ["24", 256, 128, "roy", 0, 256, 141, 35, 27], ["23", 22, 140, "peri", 1, 44, 140, 63, 28], ["100", 3, 155, "pink", 0, 3, 168, 107, 31],
  ["99", 133, 155, "red", 0, 133, 168, 115, 30], ["158", 115, 160, "olv", 0, 115, 173, 14, 21], ["32", 112, 192, "olv", 0, 112, 205, 21, 21],
  ["33", 154, 205, "org", 0, 176, 205, 21, 21], ["34", 240, 192, "brn", 0, 240, 205, 21, 21], ["31", 22, 207, "yel", 0, 44, 207, 25, 19],
  ["194", 0, 210, "teal", 1, 0, 223, 22, 17], ["8", 417, 36, "apl", 1, 430, 36, 53, 31], ["9", 500, 27, "grn", 0, 500, 40, 37, 25],
  ["10", 554, 27, "yel", 0, 554, 40, 37, 25], ["102", 504, 66, "mag", 0, 536, 66, 137, 39], ["62", 536, 53, "vio", 0, 0, 0, 0, 0],
  ["12", 430, 59, "org", 0, 430, 72, 25, 34], ["139", 402, 59, "brn", 0, 402, 72, 27, 27], ["146", 446, 59, "vio", 0, 448, 72, 31, 29], ["126", 483, 61, "hot", 0, 483, 74, 38, 20],
  ["18", 457, 92, "mag", 0, 424, 105, 57, 31], ["134", 473, 93, "apl", 1, 482, 106, 24, 25], ["130", 508, 93, "sky", 1, 508, 106, 21, 26],
  ["108", 639, 90, "roy", 0, 535, 103, 137, 31], ["25", 496, 125, "sky", 1, 496, 138, 69, 31], ["91", 680, 58, "sea", 1, 680, 71, 149, 30],
  ["19", 753, 92, "lil", 1, 683, 105, 93, 31], ["122", 794, 94, "mar", 0, 776, 107, 51, 25], ["26", 698, 139, "sea", 1, 720, 138, 55, 31],
  ["35", 432, 192, "cor", 0, 432, 205, 21, 21], ["36", 495, 192, "red", 0, 495, 205, 22, 21], ["2", 785, 3, "peri", 1, 798, 3, 79, 29],
  ["94", 838, 58, "yel", 0, 838, 71, 78, 72], ["98", 915, 58, "cor", 0, 915, 71, 56, 72], ["90", 972, 55, "lime", 1, 972, 68, 111, 33],
  ["93", 1080, 57, "grn", 0, 1080, 70, 109, 30], ["120", 1049, 87, "red", 0, 974, 100, 108, 28], ["88", 1187, 59, "sky", 1, 1188, 72, 106, 28],
  ["125", 1154, 87, "vio", 0, 1082, 100, 105, 28], ["27", 1164, 128, "lime", 1, 1164, 141, 39, 27], ["92", 1293, 58, "apl", 1, 1293, 71, 107, 29],
  ["95", 1272, 88, "olv", 0, 1187, 101, 107, 26], ["142", 1369, 85, "pink", 0, 1293, 98, 109, 29], ["89", 1399, 57, "teal", 1, 1399, 70, 107, 31],
  ["97", 1484, 87, "brn", 0, 1399, 100, 107, 29], ["15", 1505, 76, "red", 0, 1504, 76, 23, 58], ["37", 1328, 192, "pink", 0, 1328, 205, 21, 21],
  ["38", 1456, 192, "mar", 0, 1456, 205, 21, 21], ["3", 1654, 3, "roy", 0, 1667, 3, 65, 29], ["44", 1745, -12, "sea", 1, 1743, 1, 35, 28],
  ["", 0, 0, "grn", 0, 1789, 0, 33, 30], ["", 0, 0, "blue", 0, 1835, 0, 32, 30], ["", 0, 0, "org", 0, 1881, 0, 34, 31],
  ["202", 1807, 35, "brn", 0, 1840, 35, 68, 28], ["103", 1539, 56, "lil", 1, 1539, 69, 43, 71], ["107", 1582, 56, "peri", 1, 1582, 69, 43, 71],
  ["105", 1624, 55, "hot", 0, 1624, 68, 46, 72], ["13", 1679, 51, "brn", 0, 1679, 64, 101, 36], ["101", 1747, 76, "mar", 0, 1681, 89, 99, 25],
  ["16", 1718, 74, "pink", 0, 1682, 87, 59, 31], ["113", 1730, 98, "apl", 1, 1681, 111, 82, 26], ["22", 1756, 115, "blue", 0, 1778, 115, 89, 31],
  ["109", 1775, 55, "sky", 1, 1775, 68, 45, 69], ["114", 1819, 54, "grn", 0, 1819, 67, 50, 71], ["20", 1869, 99, "vio", 0, 1778, 99, 91, 29],
  ["28", 1566, 141, "sea", 1, 1588, 141, 35, 27], ["29", 1727, 138, "apl", 1, 1749, 138, 53, 31], ["30", 1898, 134, "grn", 0, 1898, 148, 19, 20],
  ["39", 1708, 191, "mag", 0, 1708, 204, 31, 25], ["40", 1772, 191, "lil", 1, 1772, 204, 31, 25], ["41", 1836, 191, "vio", 0, 1836, 204, 31, 27],
  ["149", 1869, 204, "peri", 1, 1901, 204, 19, 24],
  ["187", 100, 967, "lil", 1, 100, 980, 65, 28], ["159", 165, 966, "org", 0, 165, 979, 67, 30], ["143", 229, 964, "mar", 0, 229, 977, 68, 32],
  ["129", 324, 967, "roy", 0, 324, 980, 26, 30], ["42", 4, 998, "hot", 0, 4, 1011, 43, 28], ["190", 1167, 972, "blue", 0, 1166, 986, 23, 21],
  ["199", 1147, 973, "yel", 0, 1147, 986, 14, 21], ["137", 677, 1029, "olv", 0, 677, 1042, 34, 30], ["45", 724, 1029, "roy", 0, 724, 1042, 83, 31],
  ["106", 883, 1024, "blue", 0, 883, 1037, 57, 38], ["115", 945, 1027, "yel", 0, 945, 1040, 34, 33], ["123", 987, 1028, "mag", 0, 987, 1041, 38, 33],
  ["111", 1031, 1028, "lime", 1, 1031, 1041, 40, 33], ["118", 1076, 1027, "brn", 0, 1076, 1040, 37, 35], ["180", 1121, 1027, "org", 0, 1121, 1040, 36, 34],
  ["136", 1163, 1025, "yel", 0, 1163, 1038, 38, 39], ["132", 1205, 1023, "lime", 1, 1205, 1036, 43, 42], ["43", 1618, 994, "blue", 0, 1618, 1007, 81, 30],
  ["201", 1708, 993, "org", 0, 1708, 1006, 26, 26], ["200", 1740, 993, "olv", 0, 1740, 1006, 18, 28], ["170", 1886, 952, "peri", 1, 1900, 965, 19, 20],
  ["203", 1882, 954, "cor", 0, 1882, 967, 19, 19], ["157", 1851, 986, "yel", 0, 1884, 986, 18, 21], ["207", 1887, 972, "mag", 0, 1904, 986, 16, 22],
  ["44", 1894, 995, "peri", 1, 1882, 1008, 35, 29], ["204", 1857, 996, "red", 0, 1857, 1009, 20, 23], ["169", 1877, 1021, "blue", 0, 1842, 1034, 67, 40],
  ["121", 1719, 1029, "pink", 0, 1719, 1042, 28, 29], ["46", 1751, 1029, "sky", 1, 1750, 1042, 89, 31],
];
// [label, label x, label y, colour, dark text] for rows 2 to 45
const ROW_MARKS = [
  ["198", 21, 240, "grn", 0], ["193", 22, 258, "sky", 1], ["192", 20, 275, "roy", 0], ["196", 18, 291, "sea", 1], ["166", 19, 309, "lil", 1],
  ["185", 19, 326, "mar", 0], ["195", 21, 342, "lime", 1], ["197", 20, 359, "apl", 1], ["163", 21, 376, "pink", 0], ["173", 22, 394, "teal", 1],
  ["177", 20, 409, "grn", 0], ["155", 22, 428, "apl", 1], ["165", 21, 445, "mag", 0], ["176", 21, 461, "apl", 1], ["184", 20, 479, "pink", 0],
  ["162", 22, 494, "red", 0], ["179", 20, 513, "olv", 0], ["181", 20, 529, "brn", 0], ["152", 22, 547, "teal", 1], ["150", 21, 563, "roy", 0],
  ["154", 20, 580, "sea", 1], ["156", 20, 597, "grn", 0], ["145", 20, 615, "lil", 1], ["144", 21, 632, "mag", 0], ["151", 21, 648, "sky", 1],
  ["141", 22, 665, "red", 0], ["147", 21, 682, "hot", 0], ["172", 21, 699, "sky", 1], ["168", 22, 717, "hot", 0], ["171", 21, 734, "roy", 0],
  ["164", 22, 750, "mar", 0], ["161", 21, 768, "cor", 0], ["148", 21, 784, "blue", 0], ["160", 20, 802, "brn", 0], ["188", 20, 818, "vio", 0],
  ["153", 21, 836, "lime", 1], ["182", 21, 852, "cor", 0], ["189", 21, 869, "hot", 0], ["186", 21, 887, "mag", 0], ["167", 21, 903, "vio", 0],
  ["174", 21, 921, "lime", 1], ["175", 21, 938, "sea", 1], ["178", 21, 954, "yel", 0], ["170", 20, 972, "peri", 1],
].map(([t, x, y, c, d], i) => {
  const l = i < 1 ? 0 : i > 2 && i < 42 ? 5 : 4;
  return [t, x, y, c, d, l, i === 43 ? 971 : y, Math.max(x - l + 1, 17), i === 43 ? 14 : 18];
});

function Marker({ m: [t, lx, ly, c, dark, x, y, w, h] }) {
  return (
    <>
      {w > 0 && <div className="absolute border" style={{ left: x, top: y, width: w, height: h, borderColor: C[c] }} />}
      {t && (
        <div className={"absolute h-[14px] pl-[2px] leading-[15px] tracking-[0.5px] " + (dark ? "text-black" : "text-white")} style={{ left: lx, top: ly, width: 3 + 10 * t.length, background: C[c] }}>{t}</div>
      )}
    </>
  );
}

function Markers() {
  return (
    <div className="pointer-events-none absolute inset-0 overflow-hidden font-['DejaVu_Sans'] text-[15px]">
      {ROW_MARKS.map((m) => <Marker key={m[0]} m={m} />)}
      <Marker m={["206", 21, 974, "mar", 0, 21, 987, 18, 19]} />
      {MARKS.map((m, i) => <Marker key={i} m={m} />)}
    </div>
  );
}

export default function App() {
  return (
    <div className="relative h-[1080px] w-[1920px] overflow-hidden bg-[#e6e6e6] font-['Open_Sans','Noto_Sans',sans-serif]">
      <TitleBar />
      <Ribbon />
      <FormulaBar />
      <Sheet />
      <SheetTabs />
      <StatusBar />
      <Taskbar />
      <Markers />
    </div>
  );
}
